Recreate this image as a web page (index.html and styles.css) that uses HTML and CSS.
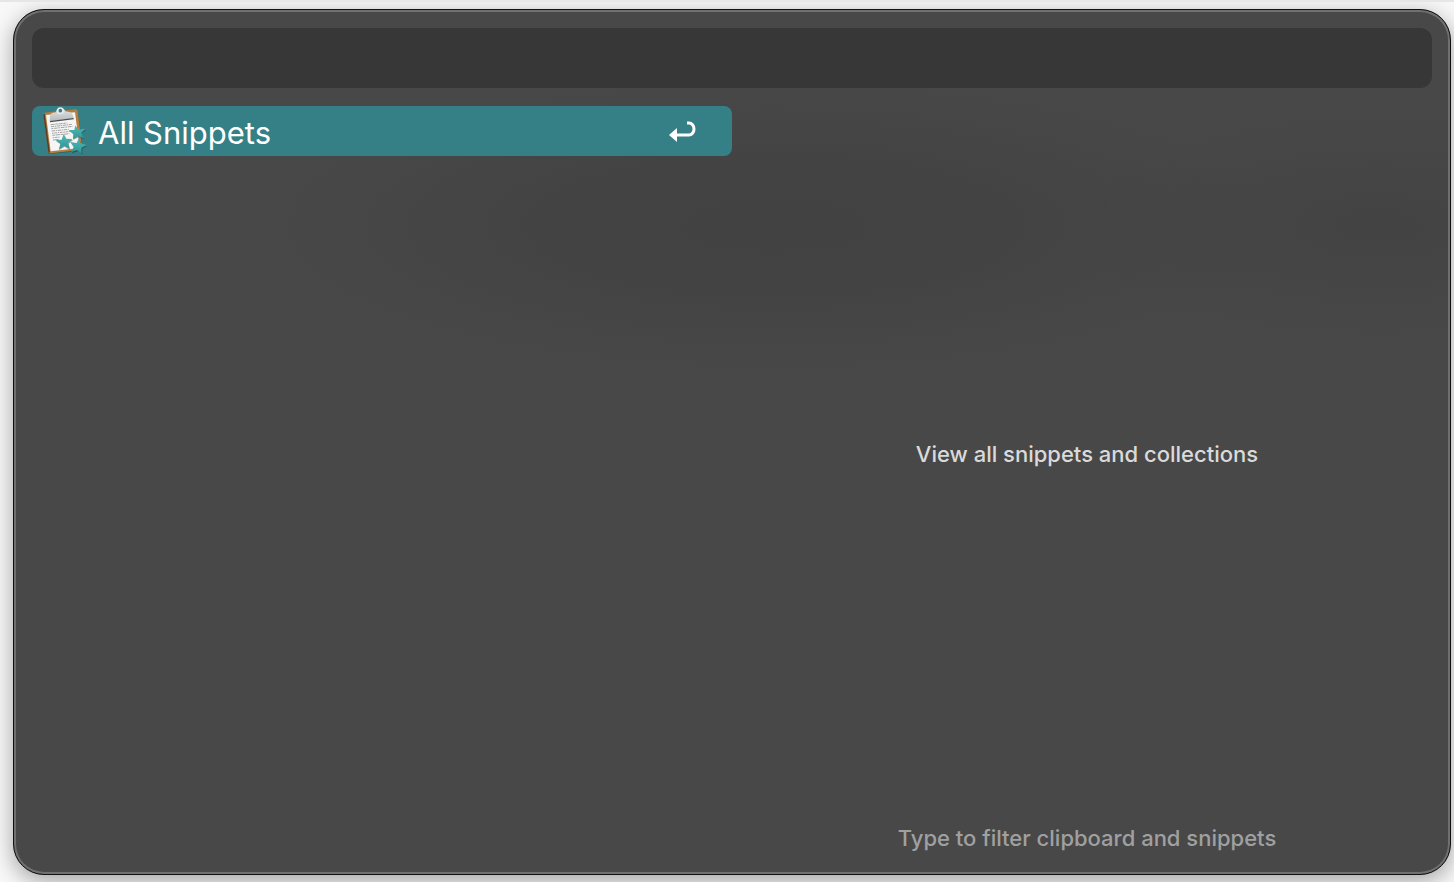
FILE: index.html
```
<!DOCTYPE html>
<html lang="en">

<head>
    <meta charset="UTF-8">
    <meta name="viewport" content="width=device-width, initial-scale=1.0">
    <title>Snippets</title>
    <link rel="stylesheet" href="styles.css">
</head>

<body>
    <main class="window">
        <input type="text" class="search" aria-label="Filter clipboard and snippets">
        <div class="panes">
            <div class="results">
                <button type="button" class="result">
                    <svg class="result-icon" viewBox="30 18 144 150" aria-hidden="true">
                        <defs>
                            <linearGradient id="starFill" x1="0" y1="0" x2="0" y2="1">
                                <stop offset="0" stop-color="#51b9b7" />
                                <stop offset="1" stop-color="#2f9698" />
                            </linearGradient>
                            <linearGradient id="clipFill" x1="0" y1="0" x2="0" y2="1">
                                <stop offset="0" stop-color="#e4e7e8" />
                                <stop offset="1" stop-color="#b4b9bb" />
                            </linearGradient>
                        </defs>
                        <!-- board and paper -->
                        <path d="M40 46 L56 162 L152 153 L159 145 L144 38 Z" fill="#173f42" opacity="0.5" />
                        <path d="M40 43 Q39 39 44 38 L136 28 Q142 28 143 32 L157 145 Q157 149 152 150 L62 160 Q56 161 55 156 Z" fill="#b67d40" />
                        <path d="M40 43 L44 40 L60 159 L55 156 Z" fill="#5c3c22" />
                        <path d="M48 45 L135 37 L149 144 L62 154 Z" fill="#f5f5f4" />
                        <!-- clip -->
                        <path d="M59 64 L60 45 Q62 40 69 38 L78 37 Q79 25 91 24 Q102 24 106 34 L121 37 Q128 40 131 55 Z" fill="url(#clipFill)" />
                        <path d="M60 65 L131 56" stroke="#4c4d4d" stroke-width="4" />
                        <circle cx="91" cy="32" r="8" fill="#367f85" stroke="#e8eced" stroke-width="5" />
                        <!-- lines of text -->
                        <g stroke="#77797a" stroke-width="2">
                            <path d="M62 74 L112 69" stroke-dasharray="12 2 8 2" />
                            <path d="M63 80 L127 73" stroke-dasharray="9 2 5 2" />
                            <path d="M64 86 L128 79" stroke-dasharray="6 2 11 2" />
                            <path d="M65 93 L116 88" stroke-dasharray="10 2 4 2" />
                            <path d="M66 100 L122 94" stroke-dasharray="5 2 8 2" />
                            <path d="M67 106 L118 101" stroke-dasharray="8 2 13 2" />
                            <path d="M68 113 L90 111" stroke-dasharray="4 2 9 2" />
                            <path d="M69 120 L86 118" />
                        </g>
                        <!-- stars -->
                        <g fill="#163f41" opacity="0.45">
                            <path d="M136 80 L146 92 L168 89 L155 102 L163 118 L146 112 L130 119 L132 104 L119 94 L135 93 Z" />
                            <path d="M104 106 L110 119 L129 120 L116 131 L120 150 L104 140 L87 151 L92 133 L78 124 L97 121 Z" />
                            <path d="M149 118 L153 134 L171 139 L157 146 L157 164 L144 153 L125 161 L134 144 L124 130 L141 132 Z" />
                        </g>
                        <g fill="url(#starFill)">
                            <path d="M136 76 L145 89 L165 86 L154 99 L162 115 L144 109 L129 118 L130 101 L116 90 L133 90 Z" />
                            <path d="M101 101 L108 116 L127 117 L114 128 L119 146 L103 137 L87 148 L91 131 L77 120 L95 119 Z" />
                            <path d="M147 113 L151 129 L169 135 L154 144 L154 161 L141 150 L124 156 L131 141 L121 126 L140 129 Z" />
                        </g>
                    </svg>
                    <span class="result-title">All Snippets</span>
                    <svg class="return-icon" viewBox="0 0 28 22" aria-hidden="true">
                        <path d="M18 2 H20 A5 6 0 0 1 20 14 H6" fill="none" stroke="#fff" stroke-width="3" />
                        <path d="M0 14 L8 7 V21 Z" fill="#fff" />
                    </svg>
                </button>
            </div>
            <section class="preview">
                <p class="preview-text">View all snippets and collections</p>
                <p class="preview-hint">Type to filter clipboard and snippets</p>
            </section>
        </div>
    </main>
</body>

</html>
```
FILE: styles.css
```
* {
    box-sizing: border-box;
}

body {
    margin: 0;
    min-height: 100vh;
    padding: 7px 3px 7px 13px;
    display: flex;
    overflow: hidden;
    background: #f8f8f8;
    border-top: 2px solid #e6e6e6;
    font-family: Inter, "Liberation Sans", sans-serif;
}

.window {
    flex: 1;
    display: flex;
    flex-direction: column;
    gap: 18px;
    padding: 18px;
    border: 1px solid #111;
    border-radius: 31px;
    background:
        radial-gradient(ellipse 520px 150px at 53% 25%, #434242, #444343 40%, transparent),
        radial-gradient(ellipse 320px 120px at 95% 25%, #444343, transparent),
        #484848;
    box-shadow: inset 0 0 0 2px #707070, 0 6px 22px rgba(0, 0, 0, 0.35);
}

.search {
    width: 100%;
    height: 60px;
    padding: 0 16px;
    border: 0;
    border-radius: 12px;
    outline: 0;
    background: #373737;
    color: #fff;
    font: inherit;
    font-size: 32px;
}

.panes {
    flex: 1;
    display: grid;
    grid-template-columns: 1fr 1fr;
}

.result {
    width: 100%;
    height: 50px;
    display: flex;
    align-items: center;
    gap: 10px;
    padding: 0 35px 0 8px;
    border: 0;
    border-radius: 8px;
    background: #358086;
    color: #fff;
    font: inherit;
    font-size: 31px;
    text-align: left;
}

.result-icon {
    width: 48px;
    height: 50px;
}

.result-title {
    flex: 1;
    padding-top: 3px;
    line-height: 46px;
}

.return-icon {
    width: 28px;
    height: 24px;
    padding-top: 2px;
}

.preview {
    display: flex;
    flex-direction: column;
    padding-left: 10px;
    font-size: 22px;
    font-weight: 500;
    line-height: 36px;
    text-align: center;
}

.preview p {
    margin: 0;
}

.preview-text {
    flex: 1;
    display: flex;
    align-items: center;
    justify-content: center;
    color: #dadada;
}

.preview .preview-hint {
    padding-top: 18px;
    color: #a0a0a0;
}
```
